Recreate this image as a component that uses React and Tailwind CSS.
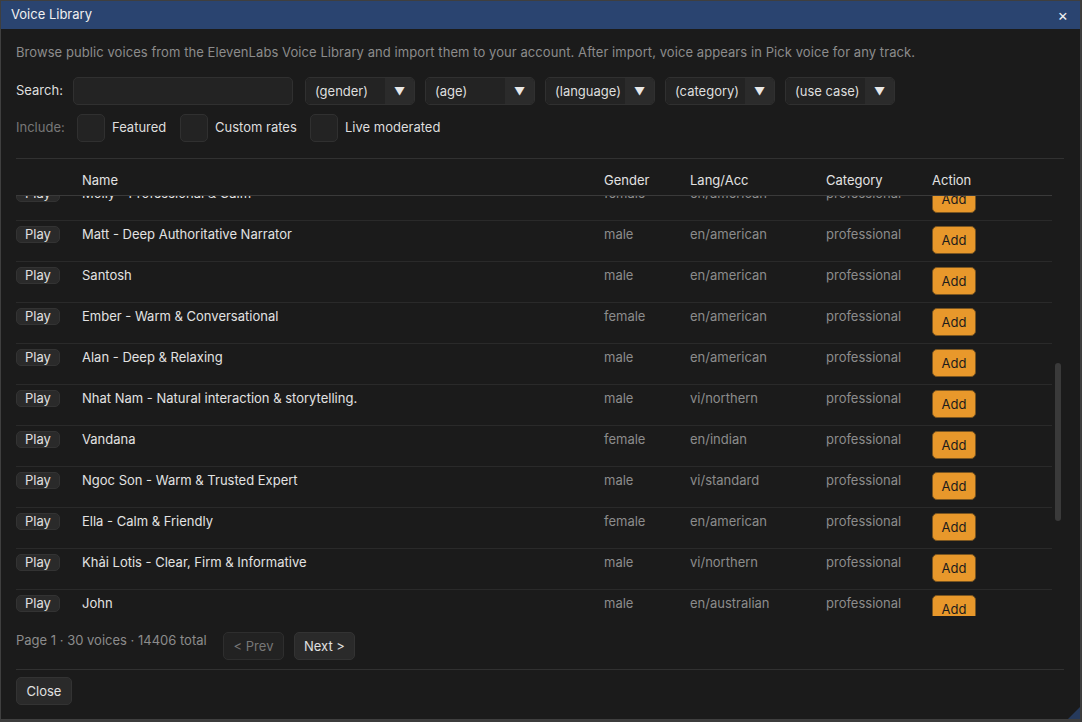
import React from "react";

const VOICES = [
  { name: "Molly - Professional & Calm", gender: "female", lang: "en/american" },
  { name: "Matt - Deep Authoritative Narrator", gender: "male", lang: "en/american" },
  { name: "Santosh", gender: "male", lang: "en/american" },
  { name: "Ember - Warm & Conversational", gender: "female", lang: "en/american" },
  { name: "Alan - Deep & Relaxing", gender: "male", lang: "en/american" },
  { name: "Nhat Nam - Natural interaction & storytelling.", gender: "male", lang: "vi/northern" },
  { name: "Vandana", gender: "female", lang: "en/indian" },
  { name: "Ngoc Son - Warm & Trusted Expert", gender: "male", lang: "vi/standard" },
  { name: "Ella - Calm & Friendly", gender: "female", lang: "en/american" },
  { name: "Khải Lotis - Clear, Firm & Informative", gender: "male", lang: "vi/northern" },
  { name: "John", gender: "male", lang: "en/australian" },
];

const COLS = "grid grid-cols-[66px_522px_86px_136px_106px_1fr]";

const Combo = ({ label }) => (
  <div className="flex h-[28px] w-[110px] overflow-hidden rounded-[5px] border border-[#303030]">
    <div className="flex-1 bg-[#232323] pl-[9px] leading-[26px] text-[#dedede]">{label}</div>
    <div className="flex w-[29px] items-center justify-center bg-[#2b2b2b] text-[11px] text-[#e8e8e8]">▼</div>
  </div>
);

const Check = ({ label, w }) => (
  <div className={`flex items-center ${w}`}>
    <div className="h-[28px] w-[28px] rounded-[5px] border border-[#303030] bg-[#232323]" />
    <span className="ml-[7px] text-[#dedede]">{label}</span>
  </div>
);

const Row = ({ v }) => (
  <div className={`${COLS} h-[41px] border-b border-[#2a2a2a] pt-[5px] leading-4`}>
    <div>
      <div className="h-[17px] w-[44px] rounded-[5px] border border-[#333] bg-[#2a2a2a] text-center leading-[15px] text-[#e0e0e0]">
        Play
      </div>
    </div>
    <div className="text-[#e2e2e2]">{v.name}</div>
    <div className="text-[#8c8c8c]">{v.gender}</div>
    <div className="text-[#8c8c8c]">{v.lang}</div>
    <div className="text-[#8c8c8c]">professional</div>
    <div>
      <div className="h-[28px] w-[44px] rounded-[5px] border border-[#7a5520] bg-[#e8982b] text-center leading-[26px] text-[#1c1c1c]">
        Add
      </div>
    </div>
  </div>
);

export default function App() {
  return (
    <div className="h-[722px] w-[1082px] bg-[#3c3c3c] font-['Inter',sans-serif] text-[13px]">
      <div className="relative flex h-[720px] w-[1081px] flex-col border border-[#3f3f3f] bg-[#1b1b1b]">
        {/* title bar */}
        <div className="flex h-[28px] items-center justify-between bg-[#2a4470] pl-[10px] pr-[12px] text-[#f0f0f0]">
          <span>Voice Library</span>
          <span className="text-[16px] leading-none">×</span>
        </div>

        <div className="flex flex-col px-[15px] pt-[15px]">
          <div className="h-4 leading-4 tracking-[0.07px] text-[#8c8c8c]">
            Browse public voices from the ElevenLabs Voice Library and import them to your account. After import, voice appears in Pick voice for any track.
          </div>

          <div className="mt-[17px] flex h-[28px] items-center">
            <span className="w-[57px] text-[#dedede]">Search:</span>
            <div className="h-[28px] w-[220px] rounded-[5px] border border-[#303030] bg-[#232323]" />
            <div className="ml-[12px] flex gap-[10px]">
              <Combo label="(gender)" />
              <Combo label="(age)" />
              <Combo label="(language)" />
              <Combo label="(category)" />
              <Combo label="(use case)" />
            </div>
          </div>

          <div className="mt-[9px] flex h-[28px] items-center">
            <span className="w-[61px] text-[#777]">Include:</span>
            <Check label="Featured" w="w-[103px]" />
            <Check label="Custom rates" w="w-[130px]" />
            <Check label="Live moderated" w="" />
          </div>

          <div className="mt-[16px] h-px w-[1048px] bg-[#313131]" />

          <div className="flex">
            <div className="w-[1036px]">
              <div className={`${COLS} h-[37px] border-b border-[#3a3a3a] pt-[13px] leading-4 text-[#e2e2e2]`}>
                <div />
                <div>Name</div>
                <div>Gender</div>
                <div>Lang/Acc</div>
                <div>Category</div>
                <div>Action</div>
              </div>
              <div className="h-[420px] overflow-hidden">
                <div className="mt-[-16px]">
                  {VOICES.map((v) => (
                    <Row key={v.name} v={v} />
                  ))}
                </div>
              </div>
            </div>
            <div className="w-[12px] pl-[3px] pt-[204px]">
              <div className="h-[158px] w-[6px] rounded-full bg-[#3a3a3a]" />
            </div>
          </div>

          <div className="mt-[16px] flex h-[28px] items-start">
            <span className="w-[207px] leading-4 text-[#8c8c8c]">Page 1 · 30 voices · 14406 total</span>
            <div className="h-[28px] w-[61px] rounded-[5px] border border-[#2e2e2e] bg-[#222] text-center leading-[26px] text-[#777]">
              &lt; Prev
            </div>
            <div className="ml-[10px] h-[28px] w-[61px] rounded-[5px] border border-[#333] bg-[#2a2a2a] text-center leading-[26px] text-[#e0e0e0]">
              Next &gt;
            </div>
          </div>

          <div className="mt-[9px] h-px w-[1048px] bg-[#313131]" />

          <div className="mt-[7px] h-[28px] w-[56px] rounded-[5px] border border-[#333] bg-[#2a2a2a] text-center leading-[26px] text-[#e0e0e0]">
            Close
          </div>
        </div>

        {/* resize grip */}
        <div className="absolute bottom-0 right-0 h-0 w-0 border-b-[12px] border-l-[12px] border-b-[#263a5c] border-l-transparent" />
      </div>
    </div>
  );
}
